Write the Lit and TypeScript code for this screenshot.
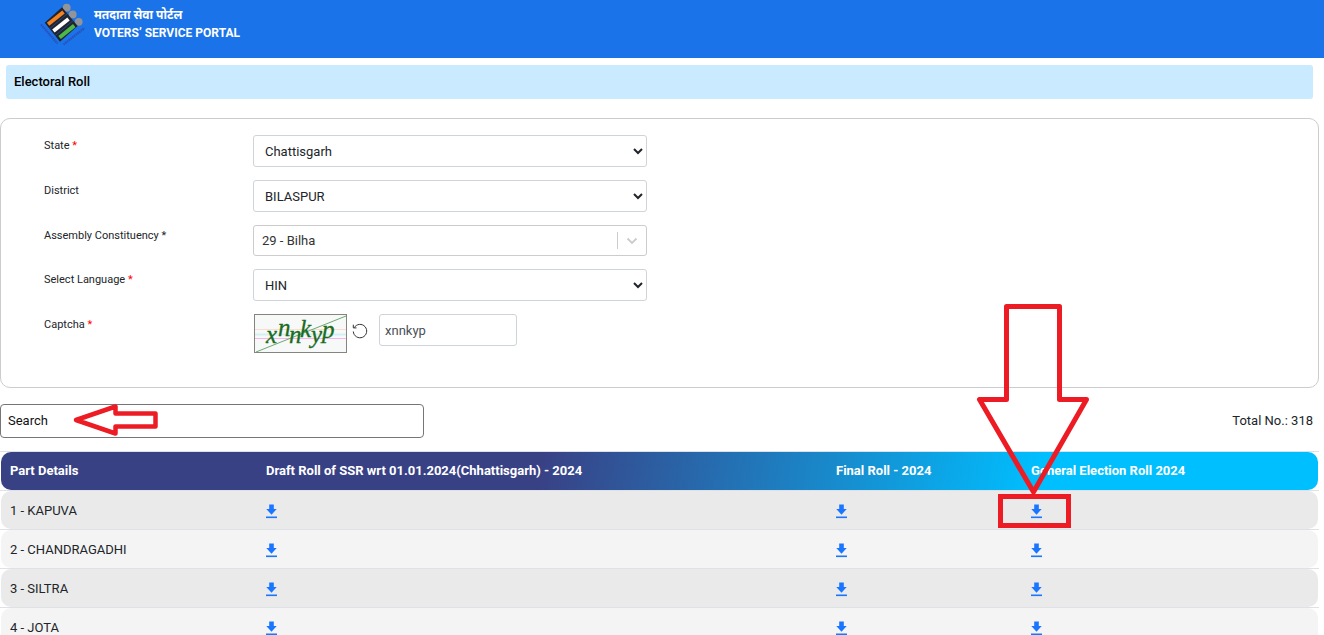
import { LitElement, html, css } from "lit";
import { customElement, state } from "lit/decorators.js";

const PARTS = ["1 - KAPUVA", "2 - CHANDRAGADHI", "3 - SILTRA", "4 - JOTA"];
const ROLLS = ["Draft Roll of SSR wrt 01.01.2024(Chhattisgarh) - 2024", "Final Roll - 2024", "General Election Roll 2024"];

@customElement("app-root")
export class AppRoot extends LitElement {
  static styles = css`
    :host {
      display: block;
      height: 100vh;
      overflow: hidden;
      position: relative;
      background: #fff;
      color: #212529;
      font: 13px/20px Roboto, "Noto Sans", sans-serif;
    }
    * { box-sizing: border-box; }
    header {
      display: flex;
      align-items: flex-start;
      gap: 8px;
      height: 58px;
      padding: 2px 38px;
      background: #1a73e8;
      color: #fff;
      font-weight: 700;
      font-size: 12px;
      line-height: 18px;
    }
    .logo { width: 48px; height: 46px; flex: none; }
    .brand { padding-top: 4px; }
    .brand p { margin: 0; }
    main { padding-right: 5px; }
    h1 {
      margin: 7px 6px 19px;
      padding: 7px 8px;
      background: #c9eaff;
      border-radius: 3px;
      color: #000;
      font-size: 13px;
      font-weight: 500;
      line-height: 20px;
    }
    .card {
      border: 1px solid #ccc;
      border-radius: 10px;
      padding: 16px 43px 34px;
      display: grid;
      grid-template-columns: 209px minmax(0, 394px);
      row-gap: 13px;
    }
    .card label { font-size: 11px; line-height: 22px; }
    .req { color: #f00; }
    .field {
      width: 100%;
      height: 32px;
      border: 1px solid #ced4da;
      border-radius: 3px;
      background: #fff;
      color: #212529;
      font: inherit;
    }
    select.field { padding: 0 1px 0 7px; }
    .combo { display: flex; align-items: center; height: 31px; border-color: #ccc; }
    .combo input {
      flex: 1;
      min-width: 0;
      border: 0;
      padding: 0 8px;
      background: none;
      color: #333;
      font: inherit;
      outline: none;
    }
    .combo button {
      width: 29px;
      height: 17px;
      border: 0;
      border-left: 1px solid #ccc;
      background: none;
      padding: 0 8px;
      display: flex;
      align-items: center;
    }
    .captcha { display: flex; align-items: flex-start; padding-left: 1px; }
    .code { width: 93px; height: 39px; flex: none; border: 1px solid #85857d; background: #f7f9f8; }
    .code text { font: italic 25px "Liberation Serif", serif; fill: #1b6c20; stroke: #1b6c20; stroke-width: .3; }
    .refresh { border: 0; background: none; padding: 0; margin: 9px 11px 0 5px; width: 16px; height: 16px; }
    .refresh svg { display: block; }
    .captcha .field { width: 138px; padding: 0 5px; color: #495057; }
    .tools { display: flex; justify-content: space-between; align-items: center; margin: 16px 0 13px; padding-right: 6px; }
    .search {
      width: 424px;
      height: 34px;
      border: 1px solid #767676;
      border-radius: 4px;
      padding: 0 7px 2px;
      font: inherit;
      color: #000;
    }
    .search::placeholder { color: #111; opacity: 1; }
    /* Hairlines run the full width behind the rounded rows */
    table {
      display: grid;
      gap: 1px;
      padding: 1px 1px 0;
      background: linear-gradient(#dee2e6 1px, #fff 1px) 0 0 / 100% 39px;
    }
    thead, tbody { display: grid; gap: 1px; }
    tr {
      display: grid;
      grid-template-columns: 256fr 570fr 195fr 296fr;
      align-items: center;
      height: 38px;
      border-radius: 10px;
    }
    th, td { padding: 0 9px; text-align: left; }
    td { padding-top: 2px; }
    th { color: #fff; font-weight: 700; }
    thead tr { background: linear-gradient(100deg, #394185 41%, #00bfff 79%); }
    tbody tr { background: #f4f4f4; }
    tbody tr:nth-child(odd) { background: #eaeaea; }
    .dl { display: block; width: 11px; height: 16px; fill: #1a75ff; }
    .marks { position: absolute; left: 0; top: 0; pointer-events: none; }
  `;

  @state() private code = "xnnkyp";

  private mark(required: boolean) {
    return required ? html`<span class="req">*</span>` : "";
  }

  private select(id: string, label: string, value: string, required: boolean) {
    return html`<label for=${id}>${label} ${this.mark(required)}</label>
      <select class="field" id=${id}><option>${value}</option></select>`;
  }

  private download(roll: string, part: string) {
    return html`<td><a class="dl" href="#" aria-label="Download ${roll}, ${part}">
      <svg class="dl" viewBox="0 0 11 16"><path d="M3.200 1.500h4.600v4.500h2.900L5.500 11.800.300 6h2.900z"/><path d="M0 13.500h11v1.600H0z"/></svg>
    </a></td>`;
  }

  render() {
    return html`
      <header>
        <svg class="logo" viewBox="38 2 48 46" role="img" aria-label="Election Commission of India">
          <g fill="#929499"><circle cx="66.700" cy="7.700" r="3.900"/><circle cx="72.700" cy="14.400" r="3.900"/><circle cx="78.700" cy="21.800" r="3.900"/></g>
          <path d="M62 7.300 77.700 26 60 41.700 44.700 22.700z" fill="#22242d"/>
          <path d="M67 14 49.600 28.700M73 20.700 55.200 35.600" stroke="#1f4da0" stroke-width=".8"/>
          <path d="M62.300 10.500 64.700 13.600 49.300 25.800 46.900 22.700z" fill="#f58220"/>
          <path d="M67.300 17.500 69.700 20.500 54.600 32.500 52.200 29.500z" fill="#fff"/>
          <path d="M73 24.100 75.500 27.200 60.800 39 58.300 35.900z" fill="#4bb84a"/>
          <g fill="none" stroke="#2b50bd" stroke-width="2.200" stroke-dasharray="1.600 .6"><path d="M41 24.500 57.500 43.500"/><path d="M63.500 44.500 84.500 28"/></g>
        </svg>
        <div class="brand"><p lang="hi">मतदाता सेवा पोर्टल</p><p>VOTERS’ SERVICE PORTAL</p></div>
      </header>
      <main>
        <h1>Electoral Roll</h1>
        <form class="card">
          ${this.select("state", "State", "Chattisgarh", true)}
          ${this.select("district", "District", "BILASPUR", false)}
          <label for="ac">Assembly Constituency *</label>
          <div class="field combo">
            <input id="ac" .value=${"29 - Bilha"}>
            <button type="button" aria-label="Open list"><svg width="12" height="8" viewBox="0 0 12 8"><path d="m1.500 1.500 4.500 4.500 4.500-4.500" fill="none" stroke="#ccc" stroke-width="1.800"/></svg></button>
          </div>
          ${this.select("lang", "Select Language", "HIN", true)}
          <label for="captcha">Captcha ${this.mark(true)}</label>
          <div class="captcha">
            <svg class="code" viewBox="0 0 91 37">
              <path d="M0 14.500h91" stroke="#fbdcd0"/><path d="M0 19.500h91" stroke="#d3f1f5" stroke-width="2"/><path d="M0 23.500h91" stroke="#f7b4ee"/>
              <path d="M1 37 91 1" stroke="#6ca772"/>
              <text x="11" y="28">x</text><text x="23" y="21">n</text><text x="34" y="28">n</text><text x="45" y="22">k</text><text x="56" y="28">y</text><text x="67" y="23">p</text>
            </svg>
            <button class="refresh" type="button" aria-label="Refresh captcha">
              <svg width="16" height="16" viewBox="0 0 16 16" fill="none" stroke="#333"><path d="M2.200 4.700A6.700 6.700 0 1 1 1.300 8.500"/><path d="M1.300 1.700v3.200h3.200"/></svg>
            </button>
            <input class="field" id="captcha" .value=${this.code} @input=${(e: Event) => (this.code = (e.target as HTMLInputElement).value)}>
          </div>
        </form>
        <div class="tools">
          <input class="search" type="text" aria-label="Search" placeholder="Search">
          <span>Total No.: 318</span>
        </div>
        <table>
          <thead><tr><th>Part Details</th>${ROLLS.map((r) => html`<th>${r}</th>`)}</tr></thead>
          <tbody>
            ${PARTS.map((p) => html`<tr><td>${p}</td>${ROLLS.map((r) => this.download(r, p))}</tr>`)}
          </tbody>
        </table>
      </main>
      <svg class="marks" width="1324" height="635" fill="none" stroke="#ed1c24" stroke-width="5" stroke-linejoin="round" aria-hidden="true">
        <path d="M1006.500 306.500h53v93h27L1033.500 492 979.500 399.500h27z"/>
        <path d="M1000.500 496.500h68v29h-68z" stroke-linejoin="miter"/>
        <path d="M76 420 115.500 406.500v7h40v13h-40v7z" stroke-width="4.500"/>
      </svg>`;
  }
}
